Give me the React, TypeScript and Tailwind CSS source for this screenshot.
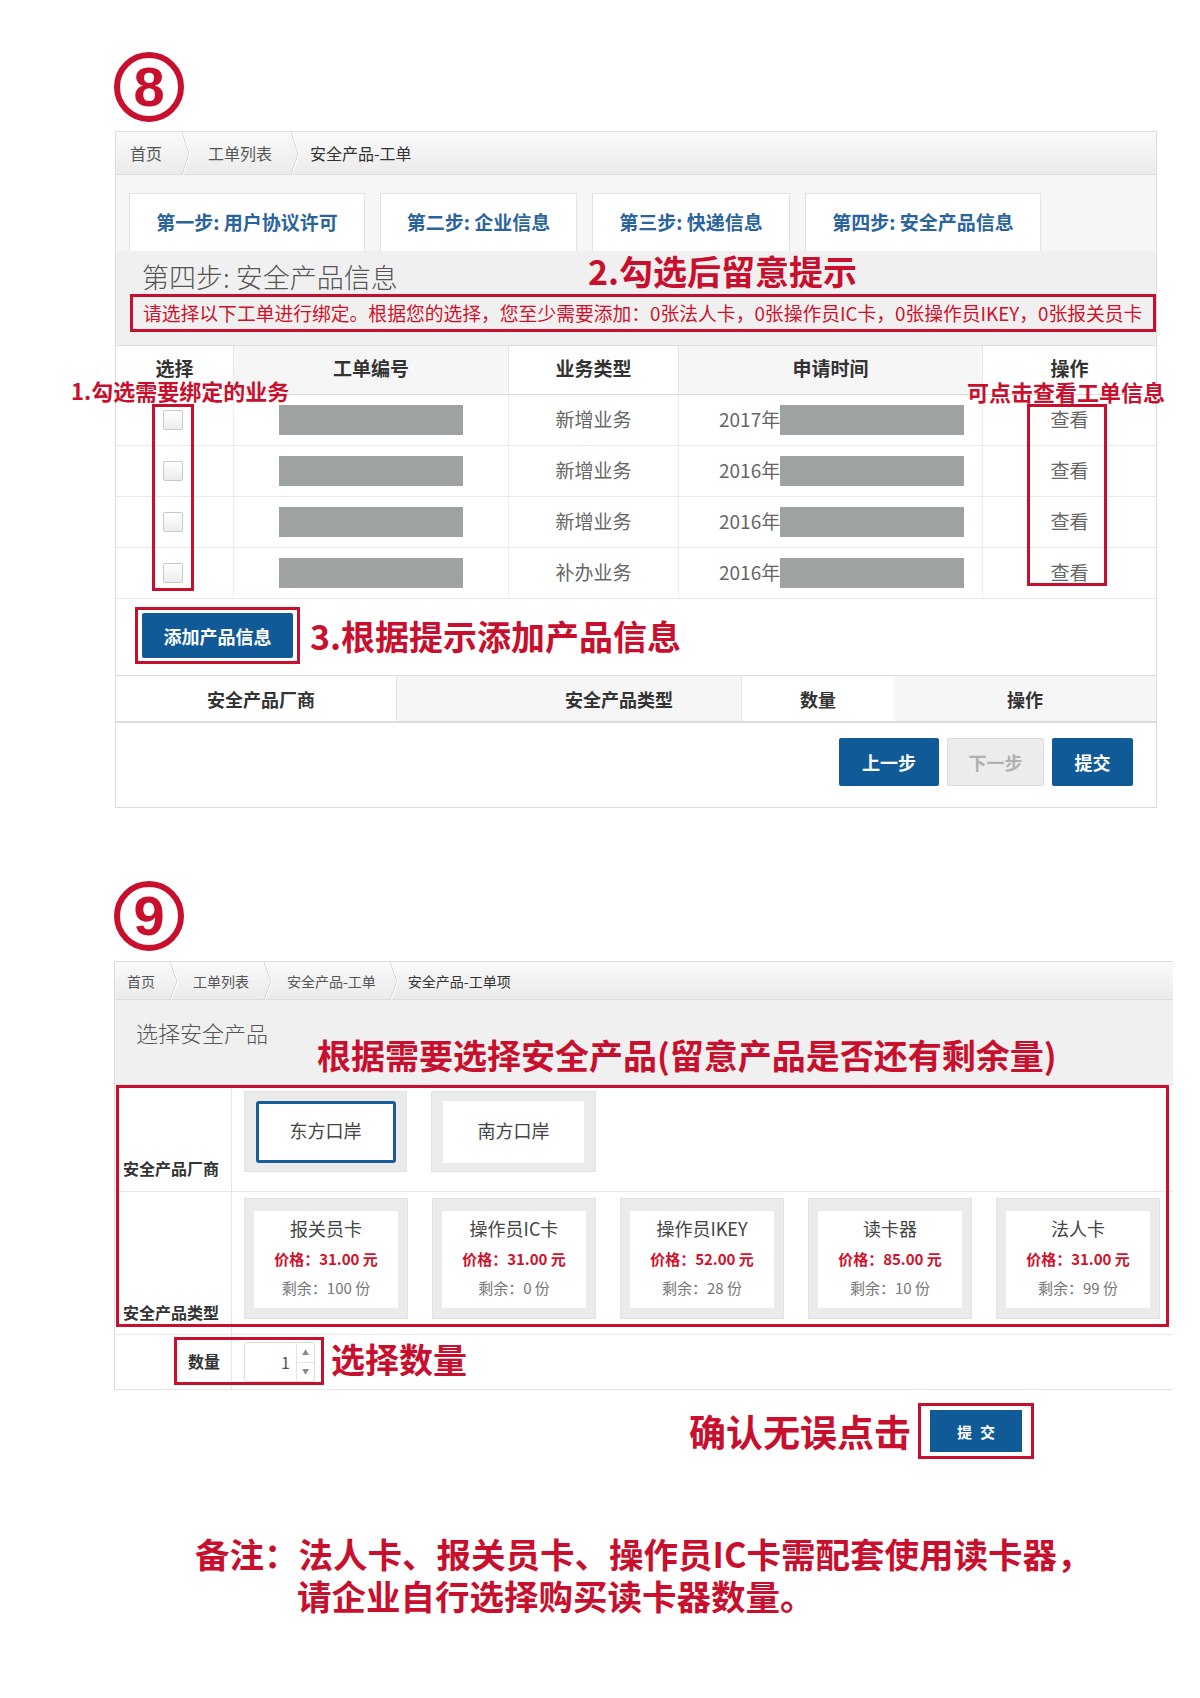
import React from "react";

const tabs = [
  { label: "第一步: 用户协议许可", w: "w-[236px]" },
  { label: "第二步: 企业信息", w: "w-[197px]" },
  { label: "第三步: 快递信息", w: "w-[198px]" },
  { label: "第四步: 安全产品信息", w: "w-[236px]" },
];

const orders = [
  { type: "新增业务", year: "2017年" },
  { type: "新增业务", year: "2016年" },
  { type: "新增业务", year: "2016年" },
  { type: "补办业务", year: "2016年" },
];

const products = [
  { name: "报关员卡", price: "31.00", left: "100" },
  { name: "操作员IC卡", price: "31.00", left: "0" },
  { name: "操作员IKEY", price: "52.00", left: "28" },
  { name: "读卡器", price: "85.00", left: "10" },
  { name: "法人卡", price: "31.00", left: "99" },
];

function Circled({ n }: { n: string }) {
  return (
    <div className="w-[70px] h-[70px] rounded-full border-[6px] border-[#c8102e] flex items-center justify-center">
      <span className="text-[#c8102e] text-[56px] font-bold leading-none font-['Liberation_Sans',sans-serif]">{n}</span>
    </div>
  );
}

function Sep({ h }: { h: number }) {
  return (
    <svg width="9" height={h} viewBox={`0 0 9 ${h}`} className="shrink-0">
      <polyline points={`1,0 8,${h / 2} 1,${h}`} fill="none" stroke="#d2d2d2" strokeWidth="1" />
      <polyline points={`2,0 9,${h / 2} 2,${h}`} fill="none" stroke="#ffffff" strokeWidth="1" />
    </svg>
  );
}

function Checkbox() {
  return <div className="w-[20px] h-[20px] border border-[#c9c9c9] rounded-[2px] bg-linear-to-b from-white to-[#ececec]" />;
}

export default function App() {
  return (
    <div className="relative w-[1200px] h-[1698px] bg-white text-[#333] font-['Noto_Sans_CJK_SC','Noto_Sans',sans-serif]">
      {/* ⑧ */}
      <div className="pt-[52px] pl-[114px]">
        <Circled n="8" />
      </div>

      <section className="mt-[9px] ml-[115px] w-[1042px] border border-[#dcdcdc]">
        <div className="h-[43px] flex items-center border-b border-[#dcdcdc] bg-linear-to-b from-[#fafafa] to-[#ebebeb] text-[16px] text-[#555] leading-none">
          <span className="ml-[14px]">首页</span>
          <span className="ml-[19px] mr-[18px]"><Sep h={43} /></span>
          <span>工单列表</span>
          <span className="ml-[18px] mr-[11px]"><Sep h={43} /></span>
          <span className="text-[#333]">安全产品-工单</span>
        </div>

        <div className="h-[76px] bg-[#f6f6f6] flex items-end gap-[15px] pl-[13px]">
          {tabs.map((t) => (
            <div
              key={t.label}
              className={`${t.w} h-[58px] bg-white border border-b-0 border-[#e2e2e2] flex items-center justify-center pb-[3px] text-[19px] font-bold text-[#2b649c] leading-none`}
            >
              {t.label}
            </div>
          ))}
        </div>

        <div className="bg-[#f0f0f0] pb-[13px]">
          <div className="h-[43px] pl-[26px] pt-[12px] text-[27px] font-light text-[#555] leading-none">第四步: 安全产品信息</div>
          <div className="ml-[14px] h-[38px] border-[3px] border-[#c8102e] flex items-center pl-[10px] text-[18.8px] text-[#d0112b] leading-none whitespace-nowrap overflow-hidden">
            请选择以下工单进行绑定。根据您的选择，您至少需要添加：0张法人卡，0张操作员IC卡，0张操作员IKEY，0张报关员卡
          </div>
        </div>

        {/* order table */}
        <div className="bg-white">
          <div className="grid grid-cols-[118px_275px_170px_304px_1fr] h-[50px] border-t border-b border-[#dcdcdc] text-[19px] font-bold text-[#333] leading-none">
            <div className="flex items-center justify-center border-r border-[#e6e6e6] pb-[5px]">选择</div>
            <div className="flex items-center justify-center border-r border-[#e6e6e6] bg-[#f6f6f6] pb-[5px]">工单编号</div>
            <div className="flex items-center justify-center border-r border-[#e6e6e6] pb-[5px]">业务类型</div>
            <div className="flex items-center justify-center border-r border-[#e6e6e6] bg-[#f6f6f6] pb-[5px]">申请时间</div>
            <div className="flex items-center justify-center pb-[5px]">操作</div>
          </div>
          {orders.map((o, i) => (
            <div
              key={i}
              className="grid grid-cols-[118px_275px_170px_304px_1fr] h-[51px] border-b border-[#e9e9e9] text-[19px] text-[#666] leading-none"
            >
              <div className="flex items-center justify-center border-r border-[#eeeeee] pr-[4px]">
                <Checkbox />
              </div>
              <div className="flex items-center justify-center border-r border-[#eeeeee]">
                <div className="w-[184px] h-[30px] bg-[#9ea3a1]" />
              </div>
              <div className="flex items-center justify-center border-r border-[#eeeeee] pb-[3px]">{o.type}</div>
              <div className="flex items-center pl-[40px] border-r border-[#eeeeee]">
                <span className="pb-[3px]">{o.year}</span>
                <div className="w-[184px] h-[30px] bg-[#9ea3a1]" />
              </div>
              <div className="flex items-center justify-center pb-[4px]">查看</div>
            </div>
          ))}
        </div>

        <div className="h-[76px] bg-white flex items-center pl-[19px] pb-[3px]">
          <div className="border-[3px] border-[#c8102e] px-[4px] py-[3px]">
            <div className="w-[151px] h-[45px] bg-[#105b97] rounded-[2px] flex items-center justify-center text-white text-[18px] font-bold leading-none">
              添加产品信息
            </div>
          </div>
          <span className="ml-[10px] text-[34px] font-bold text-[#c8102e] leading-none">3.根据提示添加产品信息</span>
        </div>

        <div className="grid grid-cols-[280px_345px_153px_1fr] h-[48px] border-t border-b-2 border-[#dcdcdc] text-[18px] font-bold text-[#333] leading-none">
          <div className="flex items-center justify-center pl-[10px]">安全产品厂商</div>
          <div className="flex items-center pl-[168px] bg-[#f6f6f6] border-l border-[#e6e6e6]">安全产品类型</div>
          <div className="flex items-center justify-center border-l border-[#e6e6e6]">数量</div>
          <div className="flex items-center justify-center bg-[#f6f6f6]">操作</div>
        </div>

        <div className="h-[84px] bg-white flex justify-end items-start pt-[15px] pr-[23px] gap-[8px] text-[18px] font-bold leading-none">
          <div className="w-[100px] h-[48px] bg-[#105b97] text-white flex items-center justify-center rounded-[2px]">上一步</div>
          <div className="w-[97px] h-[48px] bg-[#ececec] border border-[#dcdcdc] text-[#b0b0b0] flex items-center justify-center rounded-[2px]">下一步</div>
          <div className="w-[81px] h-[48px] bg-[#105b97] text-white flex items-center justify-center rounded-[2px]">提交</div>
        </div>
      </section>

      {/* ⑨ */}
      <div className="mt-[73px] pl-[114px]">
        <Circled n="9" />
      </div>

      <section className="mt-[10px] ml-[114px] w-[1059px] border-l border-t border-[#dcdcdc]">
        <div className="h-[38px] flex items-center border-b border-[#dcdcdc] bg-linear-to-b from-[#fafafa] to-[#ebebeb] text-[14px] text-[#555] leading-none">
          <span className="ml-[12px]">首页</span>
          <span className="ml-[14px] mr-[15px]"><Sep h={38} /></span>
          <span>工单列表</span>
          <span className="ml-[14px] mr-[15px]"><Sep h={38} /></span>
          <span>安全产品-工单</span>
          <span className="ml-[13px] mr-[10px]"><Sep h={38} /></span>
          <span className="text-[#333]">安全产品-工单项</span>
        </div>

        <div className="h-[84px] bg-[#f0f0f0] pl-[21px] pt-[21px] text-[22px] font-light text-[#555] leading-none">选择安全产品</div>

        <div className="border-t border-[#e5e5e5]">
          <div className="flex h-[107px] border-b border-[#e8e8e8]">
            <div className="w-[117px] shrink-0 border-r border-[#e5e5e5] flex items-end justify-end pr-[12px] pb-[15px] text-[16px] font-bold leading-none">
              安全产品厂商
            </div>
            <div className="flex gap-[24px] pt-[6px] pl-[12px]">
              <div className="w-[163px] h-[81px] bg-[#ebebeb] border border-[#e2e2e2] flex items-center justify-center">
                <div className="w-[140px] h-[62px] bg-white border-[3px] border-[#1b5d99] rounded-[3px] flex items-center justify-center pb-[3px] text-[18px] text-[#444] leading-none">
                  东方口岸
                </div>
              </div>
              <div className="w-[165px] h-[81px] bg-[#ebebeb] border border-[#e2e2e2] flex items-center justify-center">
                <div className="w-[141px] h-[62px] bg-white flex items-center justify-center pb-[3px] text-[18px] text-[#444] leading-none">
                  南方口岸
                </div>
              </div>
            </div>
          </div>

          <div className="flex h-[143px] border-b border-[#e8e8e8]">
            <div className="w-[117px] shrink-0 border-r border-[#e5e5e5] flex items-end justify-end pr-[12px] pb-[14px] text-[16px] font-bold leading-none">
              安全产品类型
            </div>
            <div className="flex gap-[24px] pt-[6px] pl-[12px]">
              {products.map((p) => (
                <div key={p.name} className="w-[164px] h-[121px] bg-[#ebebeb] border border-[#e2e2e2] pt-[12px] px-[9px]">
                  <div className="h-[97px] bg-white flex flex-col items-center leading-none">
                    <div className="mt-[8px] text-[18px] text-[#444]">{p.name}</div>
                    <div className="mt-[14px] text-[15px] font-bold text-[#d0112b]">价格：{p.price} 元</div>
                    <div className="mt-[14px] text-[15px] text-[#777]">剩余：{p.left} 份</div>
                  </div>
                </div>
              ))}
            </div>
          </div>

          <div className="flex h-[55px] border-b border-[#e5e5e5]">
            <div className="w-[117px] shrink-0 border-r border-[#e5e5e5] flex items-center justify-end pr-[11px] pb-[2px] text-[16px] font-bold leading-none">
              数量
            </div>
            <div className="flex items-center pl-[12px]">
              <div className="w-[71px] h-[40px] border border-[#dcdcdc] rounded-[3px] flex bg-white">
                <div className="flex-1 flex items-center justify-end pr-[6px] text-[16px] text-[#555] leading-none">1</div>
                <div className="w-[18px] border-l border-[#e5e5e5] flex flex-col">
                  <div className="flex-1 flex items-center justify-center text-[7px] text-[#888] leading-none">▲</div>
                  <div className="flex-1 flex items-center justify-center text-[7px] text-[#888] leading-none border-t border-[#e5e5e5]">▼</div>
                </div>
              </div>
            </div>
          </div>
        </div>
      </section>

      <div className="mt-[13px] ml-[689px] flex items-center gap-[7px]">
        <span className="text-[37px] font-bold text-[#c8102e] leading-none">确认无误点击</span>
        <div className="border-[3px] border-[#c8102e] px-[9px] py-[4px]">
          <div className="w-[92px] h-[42px] bg-[#105b97] flex items-center justify-center text-white text-[15px] font-bold leading-none tracking-[8px] pl-[8px]">
            提交
          </div>
        </div>
      </div>

      <div className="mt-[77px] ml-[195px] text-[34.5px] font-bold text-[#c8102e] leading-none whitespace-nowrap">
        <div>备注：法人卡、报关员卡、操作员IC卡需配套使用读卡器，</div>
        <div className="mt-[7px] pl-[102px]">请企业自行选择购买读卡器数量。</div>
      </div>

      {/* annotations */}
      <div className="absolute left-[588px] top-[254px] text-[34px] font-bold text-[#c8102e] leading-none whitespace-nowrap">2.勾选后留意提示</div>
      <div className="absolute left-[71px] top-[379px] text-[22px] font-bold text-[#c8102e] leading-none whitespace-nowrap">1.勾选需要绑定的业务</div>
      <div className="absolute left-[967px] top-[380px] text-[22px] font-bold text-[#c8102e] leading-none whitespace-nowrap">可点击查看工单信息</div>
      <div className="absolute left-[152px] top-[404px] w-[42px] h-[187px] border-[3px] border-[#c8102e]" />
      <div className="absolute left-[1027px] top-[404px] w-[80px] h-[182px] border-[3px] border-[#c8102e]" />
      <div className="absolute left-[317px] top-[1038px] text-[34px] font-bold text-[#c8102e] leading-none whitespace-nowrap">根据需要选择安全产品(留意产品是否还有剩余量)</div>
      <div className="absolute left-[116px] top-[1085px] w-[1053px] h-[242px] border-[3px] border-[#c8102e]" />
      <div className="absolute left-[174px] top-[1337px] w-[150px] h-[48px] border-[3px] border-[#c8102e]" />
      <div className="absolute left-[331px] top-[1342px] text-[34px] font-bold text-[#c8102e] leading-none whitespace-nowrap">选择数量</div>
    </div>
  );
}
